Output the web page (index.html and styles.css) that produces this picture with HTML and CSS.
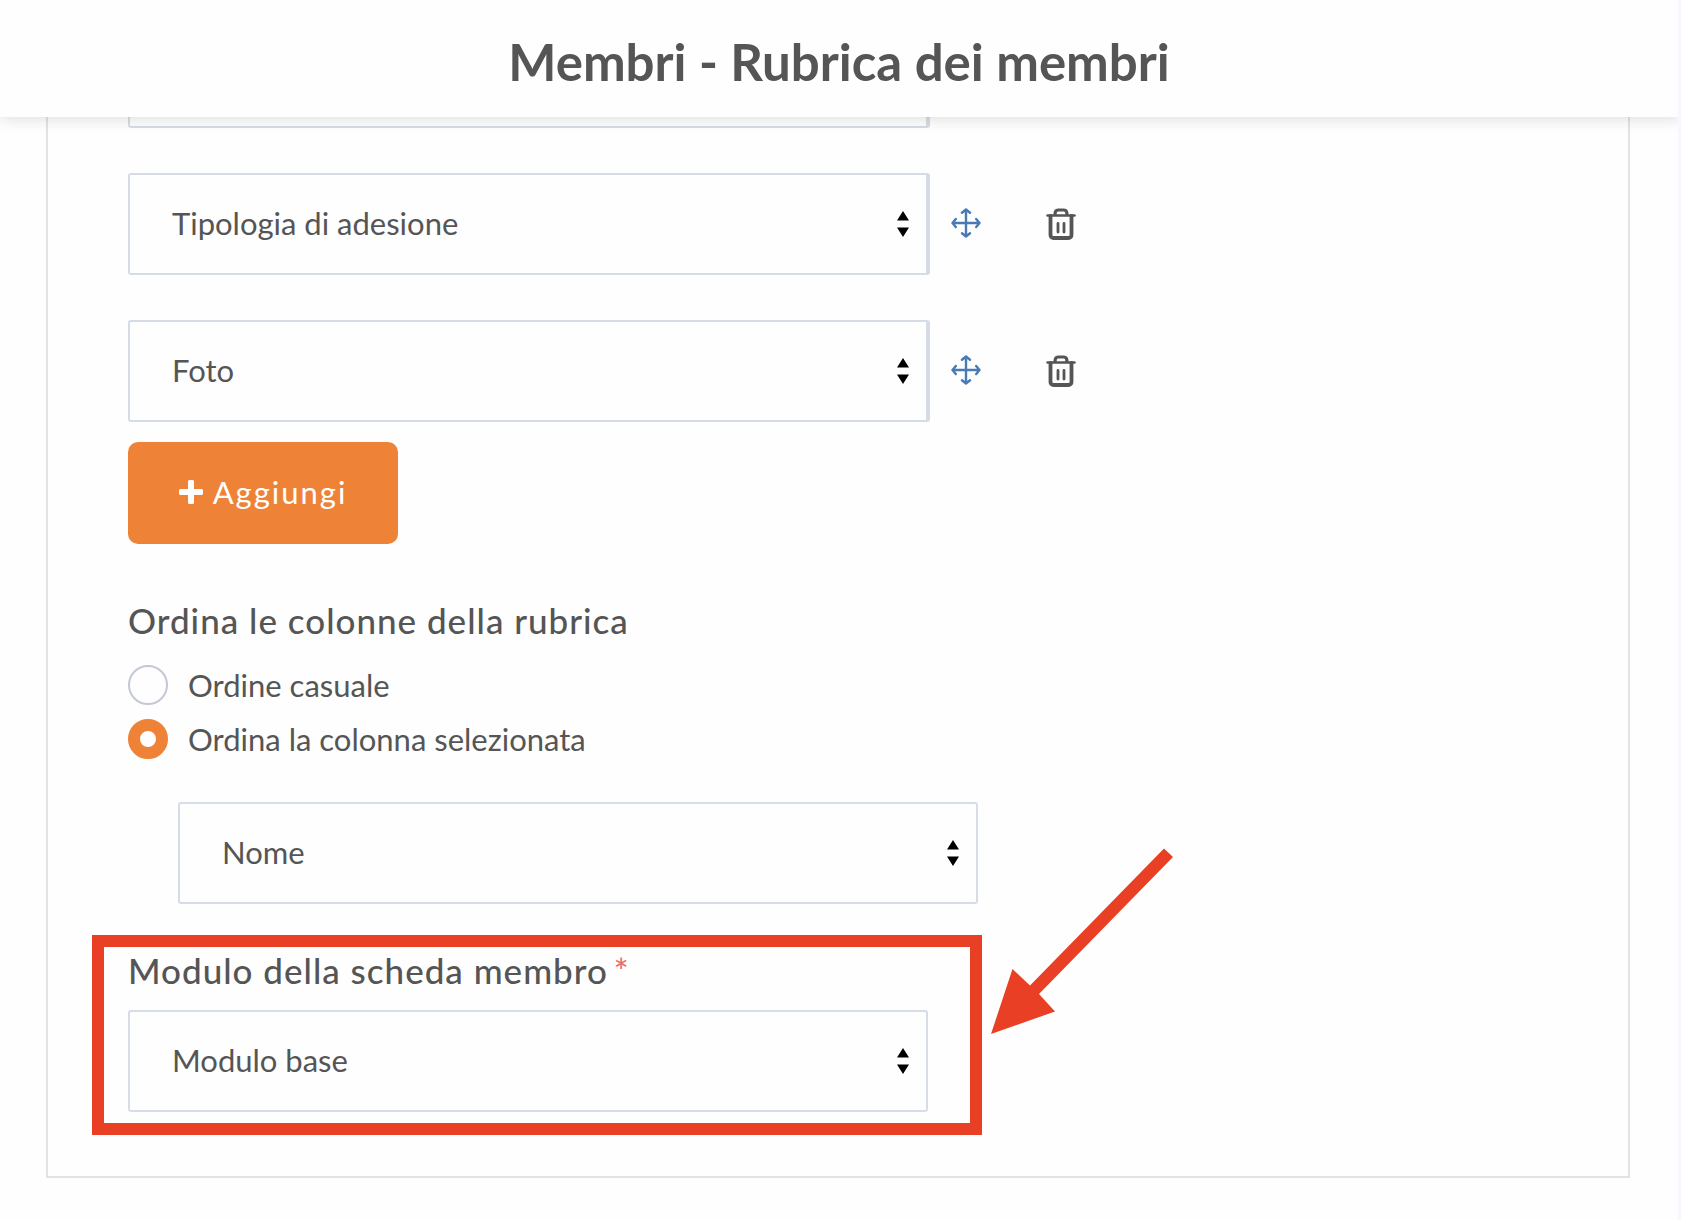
FILE: index.html
```html
<!DOCTYPE html>
<html lang="it">
<head>
<meta charset="utf-8">
<meta name="viewport" content="width=device-width, initial-scale=1">
<title>Membri - Rubrica dei membri</title>
<link rel="stylesheet" href="styles.css">
</head>
<body>
<svg class="sprite" aria-hidden="true">
  <symbol id="updown" viewBox="0 0 12 26"><path d="M6 0l6 9.500H0zM6 26l6-9.500H0z" fill="#000"/></symbol>
  <symbol id="move" viewBox="0 0 30 30"><path d="M15 1.500v27M1.500 15h27M11 4.800l4-3.300 4 3.300M11 25.200l4 3.300 4-3.300M4.800 11L1.500 15l3.300 4M25.200 11l3.300 4-3.300 4" fill="none" stroke="currentColor" stroke-width="2.400" stroke-linecap="round" stroke-linejoin="round"/></symbol>
  <symbol id="trash" viewBox="0 0 30 32"><g fill="none" stroke="currentColor" stroke-linecap="round" stroke-linejoin="round"><path d="M1.500 7.500h27" stroke-width="2.500"/><path d="M4.500 8v19a3 3 0 0 0 3 3h15a3 3 0 0 0 3-3V8" stroke-width="3.800"/><path d="M9 6.500C9 3 10 2 12 2h6c2 0 3 1 3 4.500" stroke-width="3.200"/><path d="M12 15.500v8.500M18 15.500v8.500" stroke-width="2.800"/></g></symbol>
  <symbol id="plus" viewBox="0 0 24 24"><path d="M10.500 0h3a1.500 1.500 0 0 1 1.500 1.500V9h7.500a1.500 1.500 0 0 1 1.500 1.500v3a1.500 1.500 0 0 1-1.500 1.500H15v7.500a1.500 1.500 0 0 1-1.500 1.500h-3A1.500 1.500 0 0 1 9 22.500V15H1.500A1.500 1.500 0 0 1 0 13.500v-3A1.500 1.500 0 0 1 1.500 9H9V1.500A1.500 1.500 0 0 1 10.500 0z" fill="currentColor"/></symbol>
</svg>

<header class="page-header">
  <h1 class="page-title">Membri - Rubrica dei membri</h1>
</header>

<main class="page">
  <form class="panel">
    <div class="columns">
      <div class="column-row">
        <div class="select select--grouped select--clipped">
          <select aria-label="Colonna precedente"><option></option></select>
        </div>
      </div>
      <div class="column-row">
        <div class="select select--grouped">
          <select aria-label="Colonna"><option>Tipologia di adesione</option></select>
          <svg class="select-arrows" aria-hidden="true"><use href="#updown"/></svg>
        </div>
        <button type="button" class="icon-button icon-button--move" aria-label="Sposta"><svg width="30" height="30"><use href="#move"/></svg></button>
        <button type="button" class="icon-button" aria-label="Elimina"><svg width="30" height="32"><use href="#trash"/></svg></button>
      </div>
      <div class="column-row">
        <div class="select select--grouped">
          <select aria-label="Colonna"><option>Foto</option></select>
          <svg class="select-arrows" aria-hidden="true"><use href="#updown"/></svg>
        </div>
        <button type="button" class="icon-button icon-button--move" aria-label="Sposta"><svg width="30" height="30"><use href="#move"/></svg></button>
        <button type="button" class="icon-button" aria-label="Elimina"><svg width="30" height="32"><use href="#trash"/></svg></button>
      </div>
    </div>

    <button type="button" class="add-button"><svg width="24" height="24" aria-hidden="true"><use href="#plus"/></svg>Aggiungi</button>

    <fieldset class="order">
      <legend class="field-title">Ordina le colonne della rubrica</legend>
      <label class="radio"><input type="radio" name="order">Ordine casuale</label>
      <label class="radio"><input type="radio" name="order" checked>Ordina la colonna selezionata</label>
      <div class="select select--nested">
        <select aria-label="Colonna selezionata"><option>Nome</option></select>
        <svg class="select-arrows" aria-hidden="true"><use href="#updown"/></svg>
      </div>
    </fieldset>

    <div class="module">
      <label class="field-title" for="module">Modulo della scheda membro<span class="required">*</span></label>
      <div class="select">
        <select id="module"><option>Modulo base</option></select>
        <svg class="select-arrows" aria-hidden="true"><use href="#updown"/></svg>
      </div>
      <div class="callout-frame"></div>
      <svg class="callout-arrow" width="184" height="188" viewBox="0 0 184 188" aria-hidden="true"><path d="M174 .500l9 8.500L49 146l16 17.500L1 186l21.500-65L40 137.500z" fill="#e94025"/></svg>
    </div>
  </form>
</main>
</body>
</html>
```
FILE: styles.css
```css
* {
  box-sizing: border-box;
}

body {
  margin: 0;
  background: #fefefe;
  color: #555;
  font-family: Lato, "Open Sans", sans-serif;
  font-size: 31px;
  line-height: 40px;
  border-right: 3px solid #f6f7ff;
}

.sprite {
  display: none;
}

.page-header {
  position: sticky;
  top: 0;
  z-index: 2;
  padding: 34px 3px 27px 0;
  margin-right: -3px;
  background: #fefefe;
  box-shadow: 0 2px 14px rgba(0, 0, 0, 0.13);
}

.page-title {
  margin: 0;
  font-size: 51px;
  font-weight: 700;
  line-height: 56px;
  text-align: center;
}

.page {
  padding: 0 48px 42px 46px;
}

.panel {
  padding: 0 80px 64px;
  border: 2px solid #e3e3e3;
  border-top: 0;
}

.columns {
  display: flex;
  flex-direction: column;
  gap: 45px;
}

.column-row {
  display: flex;
  align-items: center;
}

.select {
  position: relative;
  width: 100%;
  max-width: 800px;
}

.select select {
  display: block;
  width: 100%;
  height: 102px;
  padding: 0 42px 2px;
  appearance: none;
  border: 2px solid #d6dce8;
  border-radius: 3px;
  background: #fefefe;
  color: inherit;
  font: inherit;
}

.select--grouped {
  max-width: 802px;
}

.select--grouped select {
  border-color: #d6dce5;
  border-right-width: 4px;
}

.select--clipped select {
  height: 11px;
  border-top: 0;
  border-radius: 0 0 3px 3px;
}

.select-arrows {
  position: absolute;
  top: 38px;
  right: 19px;
  width: 12px;
  height: 26px;
  pointer-events: none;
}

.select--grouped .select-arrows {
  right: 21px;
}

.icon-button {
  display: flex;
  padding: 0;
  margin-left: 65px;
  border: 0;
  background: none;
  color: #555;
}

.icon-button--move {
  margin-left: 21px;
  padding-bottom: 2px;
  color: #4a7ab5;
}

.add-button {
  display: flex;
  align-items: center;
  justify-content: center;
  gap: 10px;
  width: 270px;
  height: 102px;
  margin-top: 20px;
  padding: 0 0 2px;
  border: 0;
  border-radius: 10px;
  background: #ee8338;
  color: #fff;
  font: inherit;
  letter-spacing: 2px;
}

.order {
  display: flex;
  flex-direction: column;
  min-width: 0;
  margin: 56px 0 0;
  padding: 0;
  border: 0;
}

.field-title {
  display: block;
  padding: 0;
  font-size: 35px;
  font-weight: 500;
  line-height: 40px;
  letter-spacing: 1px;
}

.radio {
  display: flex;
  align-items: center;
  gap: 20px;
  margin-bottom: 14px;
}

.field-title + .radio {
  margin-top: 25px;
}

.radio input {
  width: 40px;
  height: 40px;
  margin: 0;
  appearance: none;
  border: 2px solid #c4c8d6;
  border-radius: 50%;
}

.radio input:checked {
  border: 12px solid #ee8338;
}

.select--nested {
  margin: 29px 0 0 50px;
}

.module {
  position: relative;
  max-width: 800px;
  margin-top: 46px;
}

.module .select {
  margin-top: 20px;
}

.required {
  margin-left: 6px;
  color: #e8706a;
}

.callout-frame {
  position: absolute;
  inset: -15px -54px -23px -36px;
  border: 12px solid #e94025;
  pointer-events: none;
}

.callout-arrow {
  position: absolute;
  left: calc(100% + 62px);
  bottom: 76px;
  pointer-events: none;
}
```
